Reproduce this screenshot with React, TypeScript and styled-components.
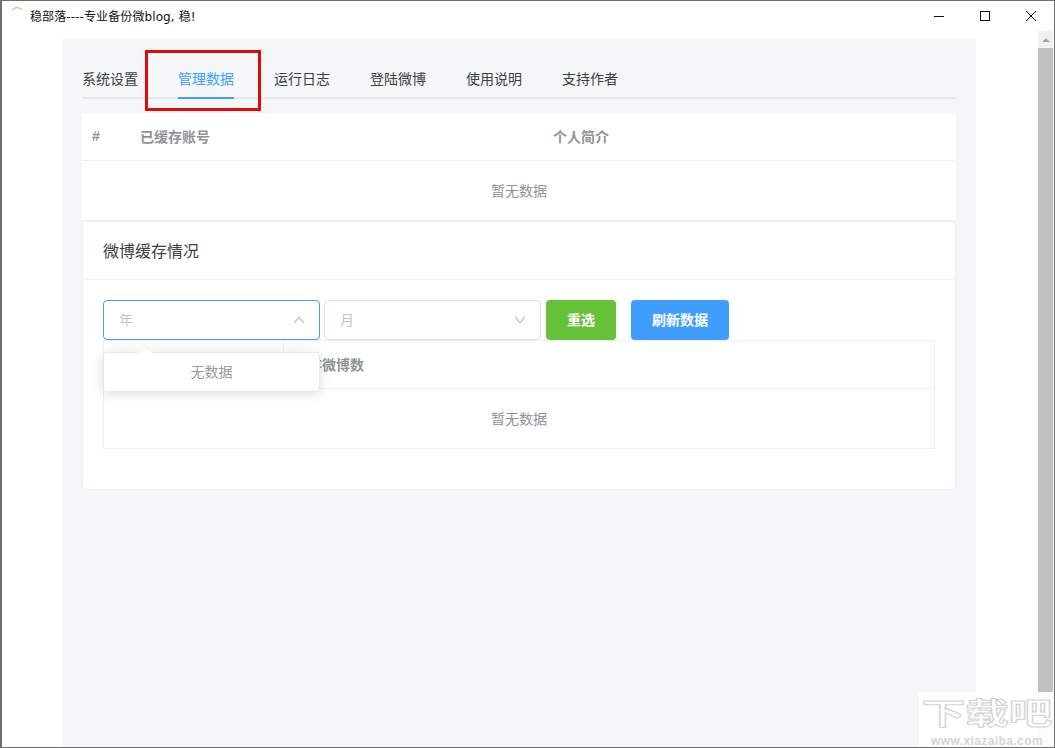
import React from 'react';
import styled, { createGlobalStyle } from 'styled-components';

const GlobalStyle = createGlobalStyle`
  html, body {
    margin: 0;
    padding: 0;
    overflow: hidden;
    background: #fff;
  }
  * {
    box-sizing: border-box;
  }
`;

const Window = styled.div`
  position: relative;
  width: 1055px;
  height: 748px;
  display: flex;
  flex-direction: column;
  overflow: hidden;
  background: #fff;
  border: 1px solid #707070;
  border-left-width: 2px;
  font-family: "Liberation Sans", "Noto Sans CJK SC", sans-serif;
`;

const TitleBar = styled.div`
  flex: none;
  height: 30px;
  display: flex;
  align-items: center;
  padding-left: 9px;
`;

const AppIcon = styled.svg`
  width: 12px;
  height: 8px;
  margin: -14px 7px 0 0;
`;

const Title = styled.div`
  flex: 1;
  margin-top: -2px;
  font-family: "DejaVu Sans", "Noto Sans CJK SC", sans-serif;
  font-size: 12px;
  letter-spacing: 0.1px;
  color: #111;
`;

const WinButton = styled.button`
  width: 46px;
  height: 30px;
  padding: 0;
  border: 0;
  background: none;
  display: flex;
  align-items: center;
  justify-content: center;
`;

const Body = styled.div`
  flex: 1;
  min-height: 0;
  display: flex;
`;

const Content = styled.div`
  flex: 1;
  min-width: 0;
  padding: 8px 0 0 60px;
`;

const Panel = styled.main`
  width: 914px;
  height: 100%;
  background: #f5f6f8;
  padding: 20px 20px 0;
`;

const Tabs = styled.nav`
  position: relative;
  height: 40px;
  display: flex;
  gap: 40px;
  border-bottom: 2px solid #e4e7ed;
`;

const Tab = styled.div<{ $active?: boolean }>`
  position: relative;
  height: 40px;
  line-height: 40px;
  font-size: 14px;
  color: ${p => (p.$active ? '#409eff' : '#3c3e42')};
  border-bottom: 2px solid ${p => (p.$active ? '#409eff' : 'transparent')};
`;

const Highlight = styled.div`
  position: absolute;
  left: -33px;
  top: -9px;
  width: 116px;
  height: 61px;
  border: 3px solid #e00a0a;
  pointer-events: none;
`;

const AccountTable = styled.section`
  margin-top: 14px;
  background: #fff;
  border-bottom: 1px solid #ebeef5;
`;

const HeadRow = styled.div<{ $cols: string; $height: number }>`
  display: grid;
  grid-template-columns: ${p => p.$cols};
  height: ${p => p.$height}px;
  align-items: center;
  border-bottom: 1px solid #ebeef5;
`;

const HeadCell = styled.div`
  padding: 0 10px 2px;
  font-size: 14px;
  font-weight: 700;
  color: #909399;
  white-space: nowrap;
`;

const Empty = styled.div<{ $height: number }>`
  height: ${p => p.$height}px;
  padding-bottom: 2px;
  display: flex;
  align-items: center;
  justify-content: center;
  font-size: 14px;
  color: #909399;
`;

const Card = styled.section`
  height: 269px;
  background: #fff;
  border: 1px solid #ebeef5;
  border-radius: 4px;
`;

const CardHeader = styled.header`
  height: 58px;
  padding: 0 20px 2px;
  display: flex;
  align-items: center;
  font-size: 16px;
  color: #3c3e42;
  border-bottom: 1px solid #ebeef5;
`;

const CardBody = styled.div`
  padding: 20px;
`;

const Filters = styled.div`
  position: relative;
  display: flex;
  height: 40px;
`;

const Select = styled.div<{ $open?: boolean }>`
  width: 217px;
  height: 40px;
  margin-right: ${p => (p.$open ? 4 : 5)}px;
  padding: 0 14px 0 15px;
  display: flex;
  align-items: center;
  justify-content: space-between;
  font-size: 14px;
  color: #c0c4cc;
  background: #fff;
  border: 1px solid ${p => (p.$open ? '#409eff' : '#dcdfe6')};
  border-radius: 4px;
`;

const SelectLabel = styled.span`
  margin-top: -2px;
`;

const ActionButton = styled.button<{ $bg: string; $width: number; $gap?: number }>`
  width: ${p => p.$width}px;
  height: 40px;
  margin-right: ${p => p.$gap ?? 0}px;
  padding: 0 0 2px;
  border: 0;
  border-radius: 4px;
  background: ${p => p.$bg};
  color: #fff;
  font-family: inherit;
  font-size: 14px;
  font-weight: 700;
`;

const Dropdown = styled.div`
  position: absolute;
  z-index: 2;
  left: 0;
  top: 52px;
  width: 217px;
  height: 40px;
  padding-bottom: 2px;
  display: flex;
  align-items: center;
  justify-content: center;
  font-size: 14px;
  color: #999;
  background: #fff;
  border: 1px solid #e8e8ec;
  border-radius: 4px;
  box-shadow: 0 2px 12px rgba(0, 0, 0, 0.14);

  &::before {
    content: '';
    position: absolute;
    left: 36px;
    top: -6px;
    width: 10px;
    height: 10px;
    background: #fff;
    transform: rotate(45deg);
    border-top: 1px solid #ebeef5;
    border-left: 1px solid #ebeef5;
  }
`;

const MonthTable = styled.section`
  border: 1px solid #ebeef5;
`;

const MonthHeadCell = styled(HeadCell)<{ $divider?: boolean }>`
  height: 100%;
  line-height: 48px;
  ${p => (p.$divider ? 'border-right: 1px solid #ebeef5;' : '')}
`;

const ScrollTrack = styled.div`
  flex: none;
  width: 15px;
  margin-right: 1px;
  display: flex;
  flex-direction: column;
  background: #f0f0f0;
`;

const ScrollArrow = styled.div`
  height: 17px;
  display: flex;
  align-items: center;
  justify-content: center;

  &::before {
    content: '';
    border-left: 4px solid transparent;
    border-right: 4px solid transparent;
    border-bottom: 4px solid #a3a3a3;
  }
`;

const ScrollThumb = styled.div`
  flex: 1;
  background: #c0c0c0;
`;

const Watermark = styled.aside`
  position: absolute;
  right: -1px;
  bottom: -1px;
  width: 136px;
  height: 56px;
  display: flex;
  flex-direction: column;
  align-items: center;
  background: rgba(255, 255, 255, 0.94);
  color: #fff;
`;

const WatermarkLogo = styled.div`
  height: 43px;
  font-size: 30px;
  line-height: 43px;
  font-weight: 700;
  transform: scaleX(1.45);
  -webkit-text-stroke: 1px #d4d4d4;
`;

const WatermarkUrl = styled.div`
  font-size: 12px;
  line-height: 13px;
  font-weight: 700;
  letter-spacing: 0.4px;
  color: #d4d4d4;
`;

const Chevron = ({ up }: { up?: boolean }) => (
  <svg width="12" height="8" viewBox="0 0 12 8" fill="none" stroke="#c0c4cc" strokeWidth="1.2">
    <path d={up ? 'M1 7l5-5.5L11 7' : 'M1 1l5 5.5L11 1'} />
  </svg>
);

const tabs = ['系统设置', '管理数据', '运行日志', '登陆微博', '使用说明', '支持作者'];

export default function App() {
  return (
    <Window>
      <GlobalStyle />
      <TitleBar>
        <AppIcon viewBox="0 0 12 8" fill="none" stroke="#c9c4bc" strokeWidth="1.4">
          <path d="M1 5Q6 0 11 5" />
        </AppIcon>
        <Title>稳部落----专业备份微blog, 稳!</Title>
        <WinButton aria-label="最小化">
          <svg width="12" height="12" viewBox="0 0 12 12" stroke="#111" strokeWidth="1">
            <path d="M1 6.5h10" />
          </svg>
        </WinButton>
        <WinButton aria-label="最大化">
          <svg width="12" height="12" viewBox="0 0 12 12" fill="none" stroke="#111" strokeWidth="1">
            <rect x="1.5" y="1.5" width="9" height="9" />
          </svg>
        </WinButton>
        <WinButton aria-label="关闭">
          <svg width="12" height="12" viewBox="0 0 12 12" stroke="#111" strokeWidth="1">
            <path d="M1 1l10 10M11 1L1 11" />
          </svg>
        </WinButton>
      </TitleBar>
      <Body>
        <Content>
          <Panel>
            <Tabs>
              {tabs.map((t, i) => (
                <Tab key={t} $active={i === 1}>
                  {t}
                  {i === 1 && <Highlight />}
                </Tab>
              ))}
            </Tabs>
            <AccountTable>
              <HeadRow $cols="48px 1fr 1fr" $height={48}>
                <HeadCell>#</HeadCell>
                <HeadCell>已缓存账号</HeadCell>
                <HeadCell>个人简介</HeadCell>
              </HeadRow>
              <Empty $height={59}>暂无数据</Empty>
            </AccountTable>
            <Card>
              <CardHeader>微博缓存情况</CardHeader>
              <CardBody>
                <Filters>
                  <Select $open>
                    <SelectLabel>年</SelectLabel>
                    <Chevron up />
                  </Select>
                  <Select>
                    <SelectLabel>月</SelectLabel>
                    <Chevron />
                  </Select>
                  <ActionButton $bg="#67c23a" $width={70} $gap={15}>重选</ActionButton>
                  <ActionButton $bg="#409eff" $width={98}>刷新数据</ActionButton>
                  <Dropdown>无数据</Dropdown>
                </Filters>
                <MonthTable>
                  <HeadRow $cols="180px 1fr" $height={48}>
                    <MonthHeadCell $divider>月份</MonthHeadCell>
                    <MonthHeadCell>缓存微博数</MonthHeadCell>
                  </HeadRow>
                  <Empty $height={59}>暂无数据</Empty>
                </MonthTable>
              </CardBody>
            </Card>
          </Panel>
        </Content>
        <ScrollTrack>
          <ScrollArrow />
          <ScrollThumb />
        </ScrollTrack>
      </Body>
      <Watermark>
        <WatermarkLogo>下载吧</WatermarkLogo>
        <WatermarkUrl>www.xiazaiba.com</WatermarkUrl>
      </Watermark>
    </Window>
  );
}
